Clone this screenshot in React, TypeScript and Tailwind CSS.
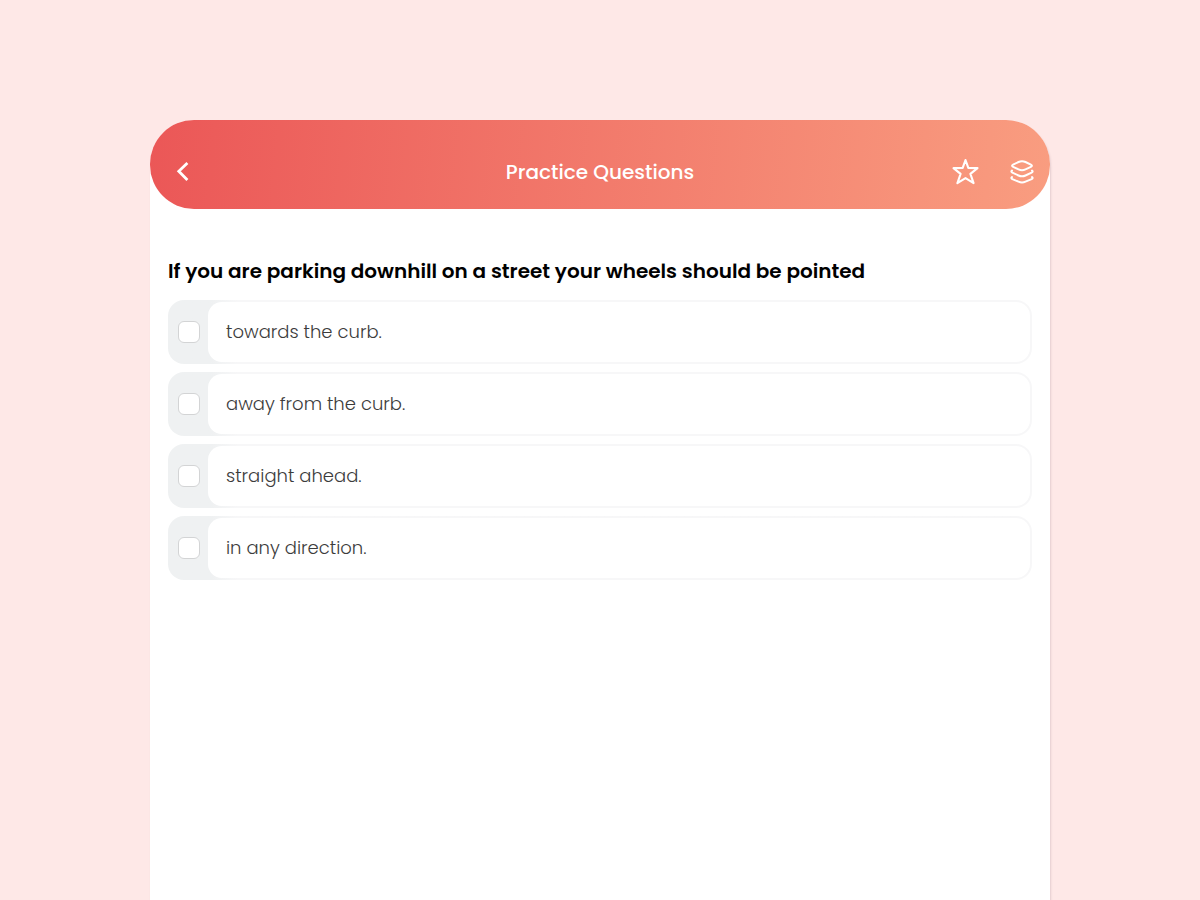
import { useState } from 'react';

const options = [
  'towards the curb.',
  'away from the curb.',
  'straight ahead.',
  'in any direction.',
];

function Header() {
  return (
    <header className="flex h-[89px] items-center justify-between rounded-[44px] bg-linear-[95deg] from-[#eb5757] to-[#f99d80] px-4 pt-3.5 text-white">
      <button type="button" aria-label="Back" className="flex w-20 pl-2">
        <svg className="h-5 w-4" viewBox="0 0 16 20" fill="none" stroke="currentColor" strokeWidth="2.8">
          <path d="M13.4 1 4.8 9.3l8.6 8.7" />
        </svg>
      </button>
      <h1 className="text-xl font-medium">Practice Questions</h1>
      <div className="flex w-20 items-center justify-between">
        <button type="button" aria-label="Add to favourites" className="-ml-0.5">
          <svg
            className="size-7"
            viewBox="0 0 28 28"
            fill="none"
            stroke="currentColor"
            strokeWidth="2.1"
            strokeLinejoin="round"
          >
            <path d="M13.5 2l2.8 7.9 9.2.2-7.1 5.8 3.2 9.2-8.1-5-8.1 5 3.2-9.2-7.1-5.8 9.2-.2z" />
          </svg>
        </button>
        <button type="button" aria-label="Question sets">
          <svg
            className="size-6"
            viewBox="0 0 24 24"
            fill="none"
            stroke="currentColor"
            strokeWidth="2"
            strokeLinecap="round"
            strokeLinejoin="round"
          >
            <path d="M8.5 2a8 8 0 0 1 7 0l5.4 2.7c1.4.7 1.4 1.4 0 2.1l-5.4 2.6a8 8 0 0 1-7 0L3.100 6.800c-1.400-.7-1.400-1.400 0-2.100z" />
            <path d="M2 10.500c-1 .8-.8 1.500.4 2.100l6.100 2.900a8 8 0 0 0 7 0l6.100-2.900c1.200-.6 1.400-1.300.4-2.100" />
            <path d="M2 17c-1 .8-.8 1.500.4 2.100l6.100 2.600a8 8 0 0 0 7 0l6.100-2.600c1.200-.6 1.400-1.300.4-2.100" />
          </svg>
        </button>
      </div>
    </header>
  );
}

export default function App() {
  const [selected, setSelected] = useState<number[]>([]);

  const toggle = (index: number) => {
    setSelected((prev) =>
      prev.includes(index) ? prev.filter((i) => i !== index) : [...prev, index]
    );
  };

  return (
    <div className="flex min-h-screen flex-col bg-[#fee8e7] pt-[120px] font-['Poppins',Inter,sans-serif]">
      <div className="mx-auto flex w-3/4 grow flex-col rounded-t-[44px] bg-white shadow-[1px_2px_2px_rgba(90,60,90,0.15)]">
        <Header />

        <main className="px-[18px] pt-12">
          <fieldset>
            <legend className="text-xl font-semibold text-black">
              If you are parking downhill on a street your wheels should be pointed
            </legend>

            <div className="mt-[15px] flex flex-col gap-2">
              {options.map((option, index) => (
                <label
                  key={option}
                  className="flex h-16 cursor-pointer overflow-hidden rounded-2xl bg-linear-to-r from-[#eff1f2] from-5% to-[#f7f7f8] to-8% p-0.5"
                >
                  <span className="flex w-[38px] items-center justify-center">
                    <input
                      type="checkbox"
                      checked={selected.includes(index)}
                      onChange={() => toggle(index)}
                      className="size-[22px] appearance-none rounded-md border border-[#d3d4d5] bg-white checked:bg-[#eb5757]"
                    />
                  </span>
                  <span className="flex grow items-center rounded-[14px] bg-white pl-[18px] text-lg font-light text-[#3c3c3c]">
                    {option}
                  </span>
                </label>
              ))}
            </div>
          </fieldset>
        </main>
      </div>
    </div>
  );
}
